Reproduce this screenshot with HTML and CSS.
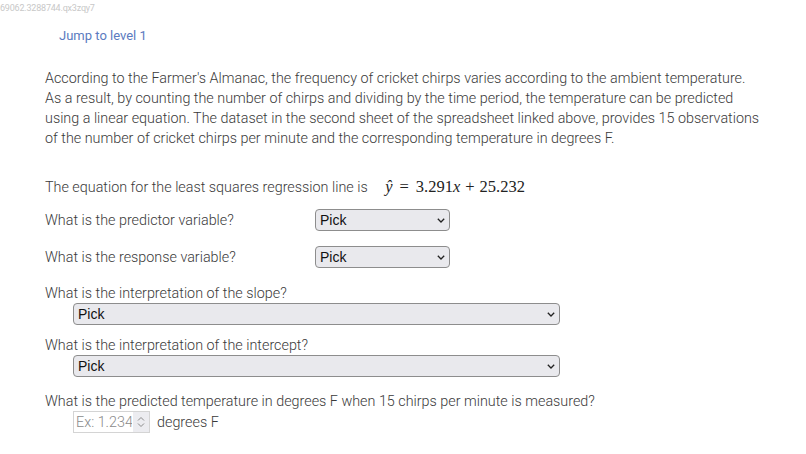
FILE: index.html
```html
<!DOCTYPE html>
<html>
<head>
<meta charset="utf-8">
<link rel="stylesheet" href="styles.css">
</head>
<body>
<div class="qid">69062.3288744.qx3zqy7</div>
<div class="jump">Jump to level 1</div>
<div class="content">
  <p class="intro">According to the Farmer's Almanac, the frequency of cricket chirps varies according to the ambient temperature. As a result, by counting the number of chirps and dividing by the time period, the temperature can be predicted using a linear equation. The dataset in the second sheet of the spreadsheet linked above, provides 15 observations of the number of cricket chirps per minute and the corresponding temperature in degrees F.</p>
  <p class="eq">The equation for the least squares regression line is <span class="math"><span class="mi">ŷ</span><span class="mo">=</span>3.291<span class="mi">x</span><span class="mo plus">+</span>25.232</span></p>
  <div class="row">
    <span class="label">What is the predictor variable?</span>
    <span class="selwrap small"><select class="sel"><option>Pick</option></select><svg class="chev" width="8" height="5" viewBox="0 0 8 5"><path d="M0.8 0.8 L4 4 L7.2 0.8" fill="none" stroke="#222" stroke-width="1.3"/></svg></span>
  </div>
  <div class="row">
    <span class="label">What is the response variable?</span>
    <span class="selwrap small"><select class="sel"><option>Pick</option></select><svg class="chev" width="8" height="5" viewBox="0 0 8 5"><path d="M0.8 0.8 L4 4 L7.2 0.8" fill="none" stroke="#222" stroke-width="1.3"/></svg></span>
  </div>
  <div class="block first">
    <div class="blabel">What is the interpretation of the slope?</div>
    <span class="selwrap wide"><select class="sel"><option>Pick</option></select><svg class="chev" width="8" height="5" viewBox="0 0 8 5"><path d="M0.8 0.8 L4 4 L7.2 0.8" fill="none" stroke="#222" stroke-width="1.3"/></svg></span>
  </div>
  <div class="block">
    <div class="blabel">What is the interpretation of the intercept?</div>
    <span class="selwrap wide"><select class="sel"><option>Pick</option></select><svg class="chev" width="8" height="5" viewBox="0 0 8 5"><path d="M0.8 0.8 L4 4 L7.2 0.8" fill="none" stroke="#222" stroke-width="1.3"/></svg></span>
  </div>
  <div class="block last">
    <div class="blabel">What is the predicted temperature in degrees F when 15 chirps per minute is measured?</div>
    <div class="answer">
      <span class="numwrap">
        <input class="num" type="text" placeholder="Ex: 1.234">
        <span class="spin"><svg width="8" height="12" viewBox="0 0 8 12"><path d="M1 4.5 L4 1.5 L7 4.5 M1 7.5 L4 10.5 L7 7.5" fill="none" stroke="#8a8a8a" stroke-width="1"/></svg></span>
      </span>
      <span class="unit">degrees F</span>
    </div>
  </div>
</div>
</body>
</html>
```
FILE: styles.css
```css
body {
  margin: 0;
  font-family: Roboto, "Noto Sans", sans-serif;
  color: #333;
  background: #fff;
}
.qid {
  font-size: 9px;
  color: #c8c8c8;
  padding-top: 3px;
  line-height: 11px;
  letter-spacing: -0.2px;
}
.jump {
  margin: 14px 0 0 59px;
  font-size: 13px;
  color: #5b7bc0;
  line-height: 16px;
}
.content {
  padding-left: 45px;
  width: 720px;
  font-size: 14.35px;
  font-weight: 300;
  color: #3a3a3a;
}
.intro {
  margin: 25px 0 0 0;
  line-height: 20px;
}
.eq {
  margin: 28px 0 0 0;
  line-height: 20px;
}
.math {
  font-family: "Liberation Serif", "DejaVu Serif", serif;
  font-size: 16.5px;
  font-weight: 400;
  color: #222;
  margin-left: 14px;
}
.mi {
  font-style: italic;
}
.mo {
  margin: 0 7px;
}
.mo.plus {
  margin: 0 5px;
}
.row {
  display: flex;
  align-items: center;
  margin-top: 11px;
}
.row + .row {
  margin-top: 15px;
}
.label {
  width: 270px;
}
.selwrap {
  position: relative;
  display: inline-block;
  height: 22px;
}
.sel {
  appearance: none;
  -webkit-appearance: none;
  display: block;
  width: 100%;
  height: 22px;
  font-family: Arial, "Liberation Sans", sans-serif;
  font-size: 14px;
  font-weight: 400;
  border: 1px solid #8d8d8d;
  border-radius: 4px;
  background: #e9e9ed;
  color: #111;
  padding: 0 4px;
  margin: 0;
}
.chev {
  position: absolute;
  right: 5px;
  top: 9px;
  pointer-events: none;
}
.small {
  width: 135px;
}
.wide {
  width: 487px;
  margin-left: 28px;
}
.block {
  margin-top: 12px;
}
.block.first {
  margin-top: 17px;
}
.block.last {
  margin-top: 16px;
}
.blabel {
  line-height: 17px;
  margin-bottom: 1px;
}
.answer {
  display: flex;
  align-items: center;
  margin-left: 28px;
  margin-top: 0;
}
.numwrap {
  display: flex;
  width: 77px;
  height: 22px;
  box-sizing: border-box;
  border: 1px solid #d4d4d4;
  background: #fff;
}
.num {
  width: 58px;
  height: 20px;
  box-sizing: border-box;
  border: none;
  outline: none;
  font-family: Roboto, sans-serif;
  font-size: 14.35px;
  font-weight: 300;
  padding: 0 0 0 2px;
  margin: 0;
  color: #333;
}
.num::placeholder {
  color: #8a8a8a;
}
.spin {
  display: flex;
  align-items: center;
  justify-content: center;
  width: 16px;
  height: 20px;
  background: #ececf0;
  margin-left: 1px;
}
.unit {
  margin-left: 7px;
}
```
